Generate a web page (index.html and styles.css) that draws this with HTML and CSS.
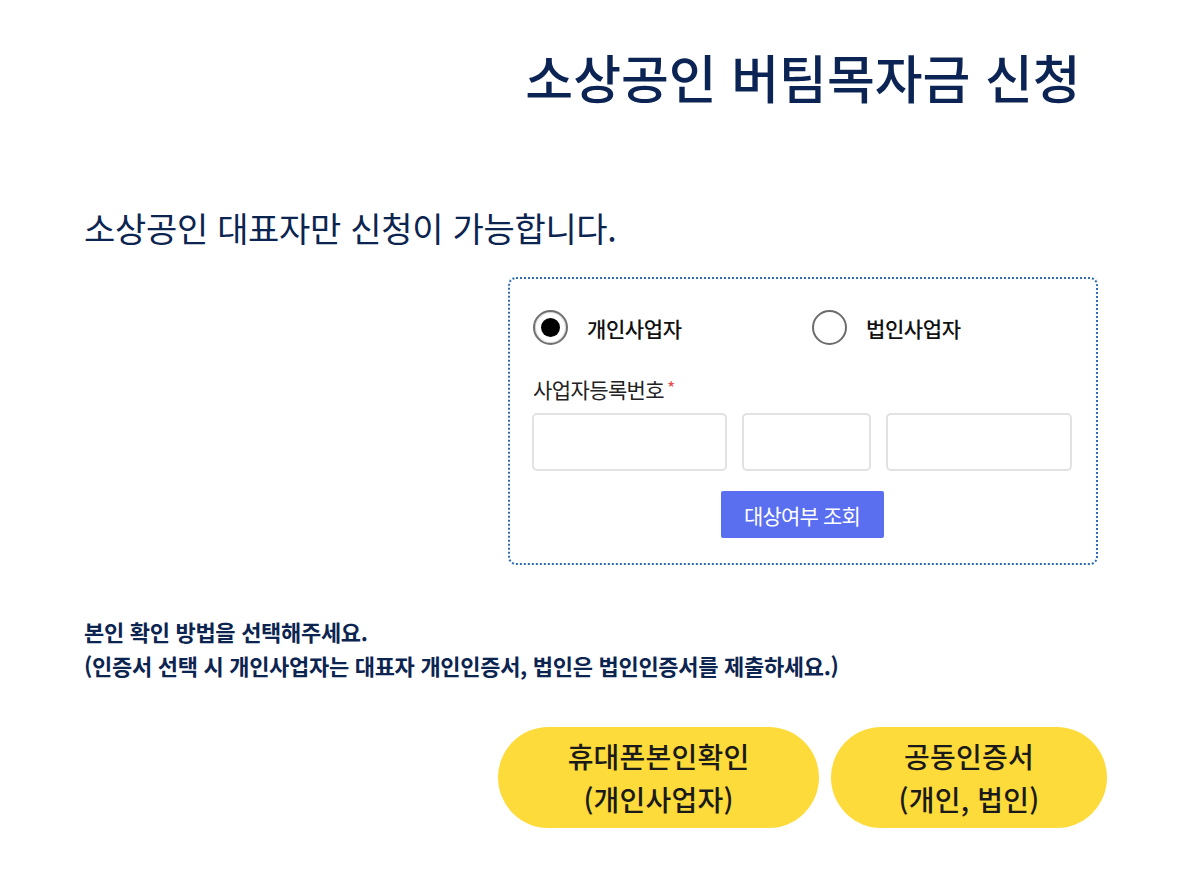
FILE: index.html
```html
<!DOCTYPE html>
<html lang="ko">
<head>
<meta charset="utf-8">
<title>소상공인 버팀목자금 신청</title>
<link rel="stylesheet" href="styles.css">
</head>
<body>
<div class="page">
  <div class="right-col">
    <h1 class="title">소상공인 버팀목자금 신청</h1>
  </div>
  <p class="subtitle">소상공인 대표자만 신청이 가능합니다.</p>
  <div class="right-col">
    <div class="box">
      <div class="radio-row">
        <label class="option first">
          <span class="radio checked"><span class="dot"></span></span>
          <span class="option-label">개인사업자</span>
        </label>
        <label class="option">
          <span class="radio"></span>
          <span class="option-label">법인사업자</span>
        </label>
      </div>
      <div class="field-label">사업자등록번호<span class="req">*</span></div>
      <div class="inputs">
        <div class="input w1"></div>
        <div class="input w2"></div>
        <div class="input w3"></div>
      </div>
      <div class="btn-row">
        <button class="check-btn">대상여부 조회</button>
      </div>
    </div>
  </div>
  <p class="notice">본인 확인 방법을 선택해주세요.<br>(인증서 선택 시 개인사업자는 대표자 개인인증서, 법인은 법인인증서를 제출하세요.)</p>
  <div class="auth-row">
    <button class="pill pill-phone">휴대폰본인확인<br>(개인사업자)</button>
    <button class="pill pill-cert">공동인증서<br>(개인, 법인)</button>
  </div>
</div>
</body>
</html>
```

FILE: styles.css
```css
html, body {
  margin: 0;
  padding: 0;
  background: #fff;
}
body {
  font-family: "Noto Sans CJK KR", "Noto Sans", sans-serif;
  color: #0c2450;
}
.page {
  padding: 47px 0 0 84px;
}
.right-col {
  margin-left: 424px;
  width: 590px;
}
.title {
  margin: 0;
  text-align: center;
  font-size: 52px;
  line-height: 60px;
  font-weight: 500;
  color: #0b2454;
  letter-spacing: 0;
}
.subtitle {
  margin: 99px 0 27px 0;
  font-size: 34px;
  line-height: 44px;
  font-weight: 400;
  color: #0c2450;
  letter-spacing: -0.3px;
}
.box {
  box-sizing: border-box;
  width: 590px;
  border: 2px dotted #2e6db4;
  border-radius: 8px;
  padding: 31px 24px 25px 22px;
}
.radio-row {
  display: flex;
  height: 35px;
  align-items: center;
}
.option {
  display: flex;
  align-items: center;
  flex: none;
  margin-left: 1px;
}
.option.first {
  width: 278px;
}
.radio {
  box-sizing: border-box;
  width: 35px;
  height: 35px;
  border-radius: 50%;
  border: 2px solid #6b6b6b;
  display: flex;
  align-items: center;
  justify-content: center;
  flex: none;
}
.radio.checked {
  border-color: #707070;
  box-shadow: inset 0 0 0 1px #d9d9d9;
}
.dot {
  width: 19px;
  height: 19px;
  border-radius: 50%;
  background: #000;
}
.option-label {
  margin-left: 19px;
  font-size: 21px;
  line-height: 26px;
  font-weight: 500;
  color: #111;
  letter-spacing: -0.4px;
}
.field-label {
  margin-top: 29px;
  font-size: 21px;
  line-height: 26px;
  color: #222;
  letter-spacing: -0.6px;
  padding-left: 1px;
}
.req {
  color: #e94e4e;
  font-size: 18px;
  margin-left: 3px;
  vertical-align: 3px;
}
.inputs {
  display: flex;
  gap: 15px;
  margin-top: 11px;
}
.input {
  box-sizing: border-box;
  height: 58px;
  border: 2px solid #e2e2e2;
  border-radius: 5px;
  background: #fff;
}
.w1 { width: 195px; }
.w2 { width: 130px; }
.w3 { width: 186px; }
.btn-row {
  display: flex;
  justify-content: center;
  margin-top: 20px;
}
.check-btn {
  width: 163px;
  height: 47px;
  border: 0;
  border-radius: 2px;
  background: #5a6ff0;
  color: #fff;
  font-family: inherit;
  font-size: 21px;
  letter-spacing: -0.8px;
  padding: 0;
}
.notice {
  margin: 49px 0 0 0;
  font-size: 22px;
  line-height: 34px;
  font-weight: 700;
  color: #0c2450;
  letter-spacing: -0.3px;
}
.auth-row {
  display: flex;
  gap: 12px;
  margin: 45px 0 0 414px;
}
.pill {
  height: 101px;
  border: 0;
  border-radius: 51px;
  background: #fddb3a;
  color: #1a1a1a;
  font-family: inherit;
  font-size: 28px;
  line-height: 43px;
  font-weight: 500;
  letter-spacing: 0.2px;
  padding: 0;
}
.pill-phone { width: 321px; }
.pill-cert { width: 276px; }
```
